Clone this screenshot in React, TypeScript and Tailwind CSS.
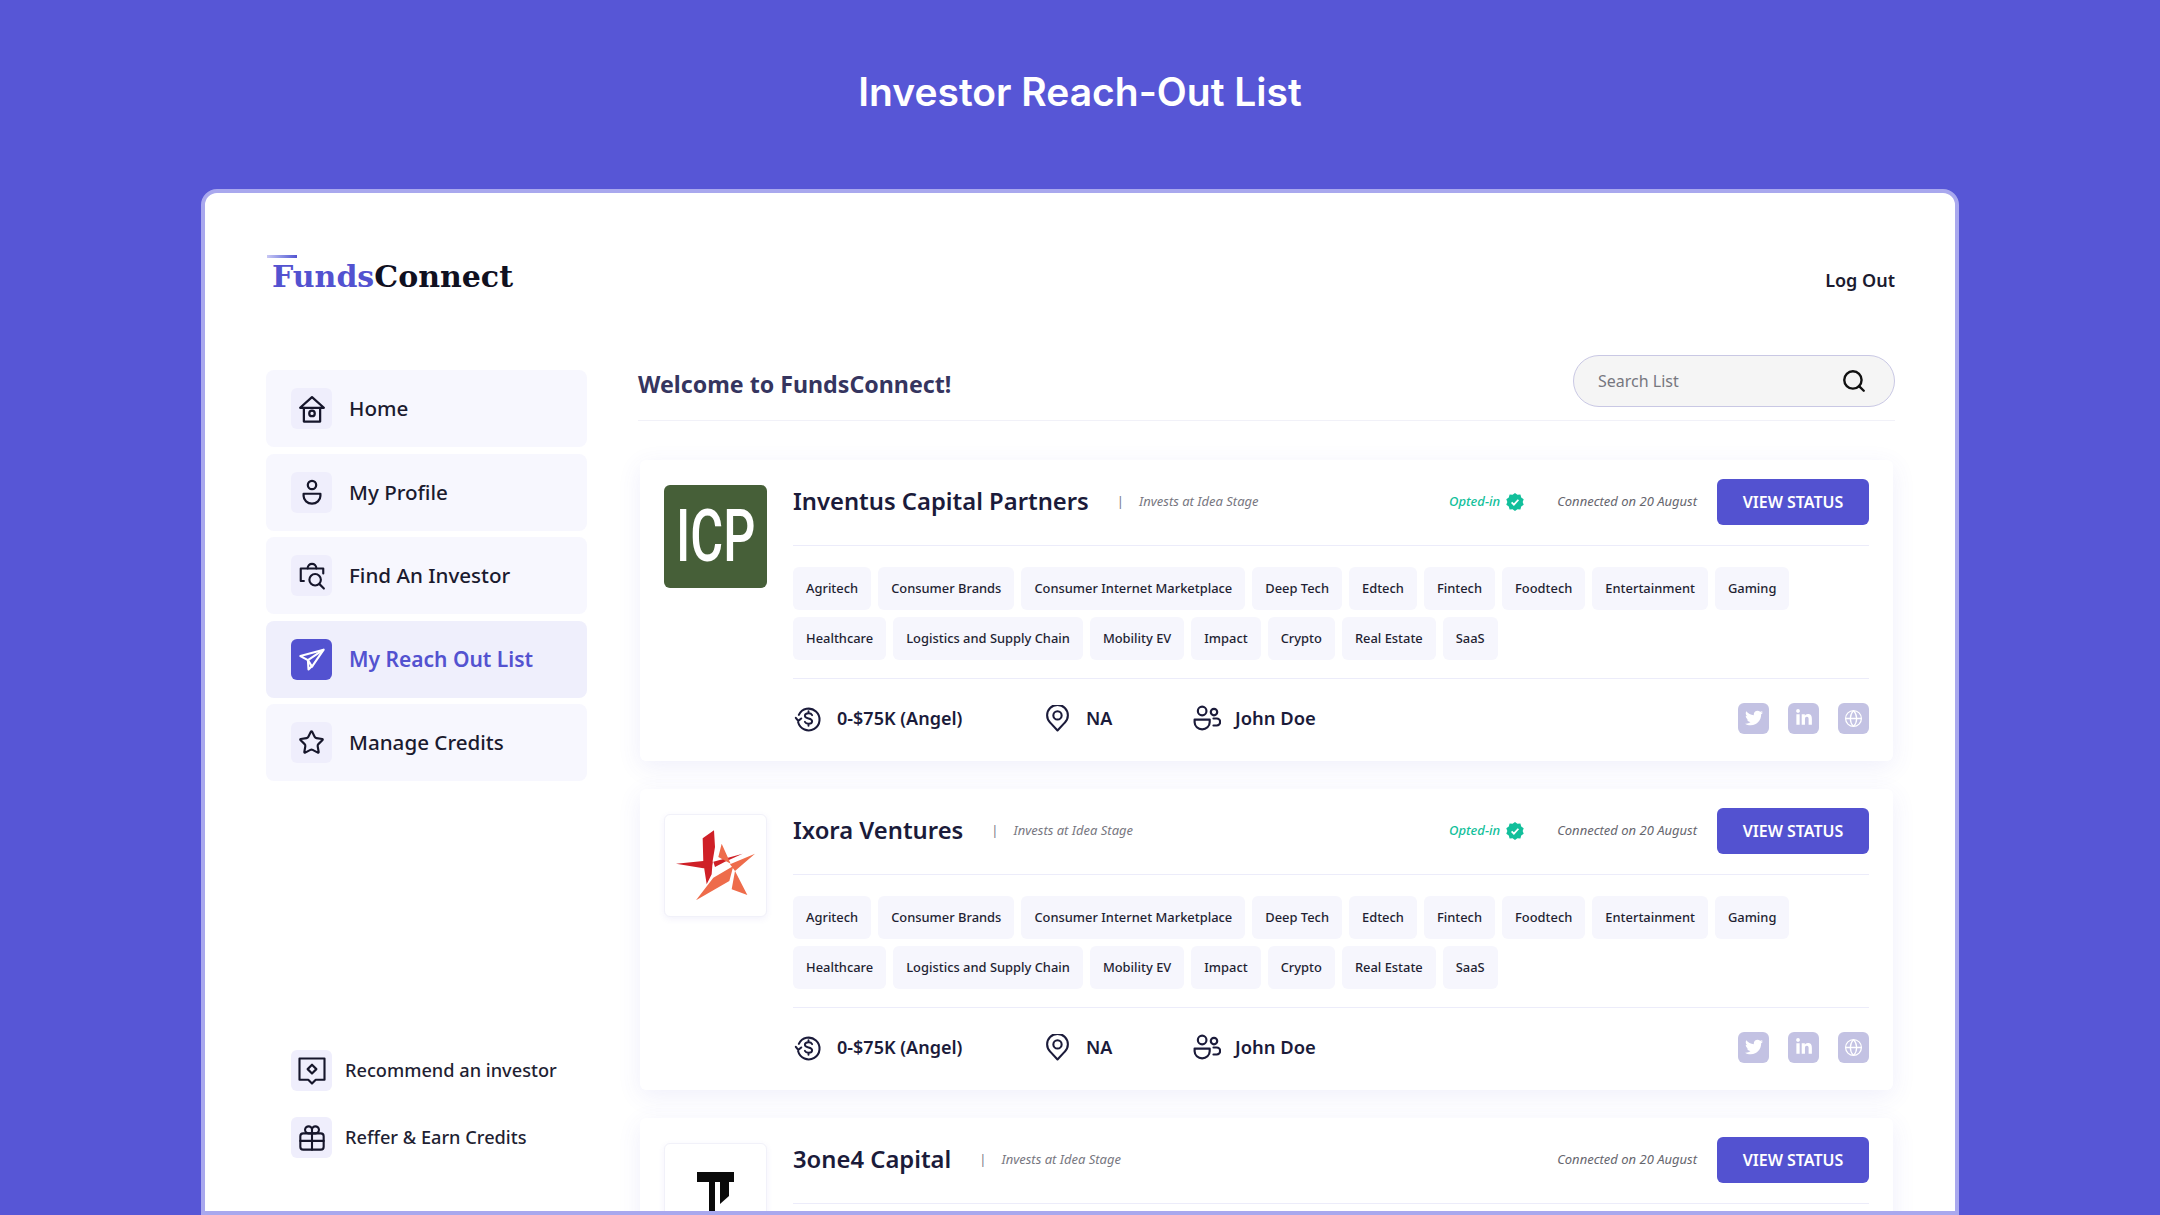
import React from 'react';
import { FaTwitter, FaLinkedinIn } from 'react-icons/fa';
import { Globe, Star, Search } from 'lucide-react';

const tags = [
  'Agritech',
  'Consumer Brands',
  'Consumer Internet Marketplace',
  'Deep Tech',
  'Edtech',
  'Fintech',
  'Foodtech',
  'Entertainment',
  'Gaming',
  'Healthcare',
  'Logistics and Supply Chain',
  'Mobility EV',
  'Impact',
  'Crypto',
  'Real Estate',
  'SaaS',
];

const strokeProps = {
  fill: 'none',
  stroke: 'currentColor',
  strokeWidth: 2,
  strokeLinecap: 'round' as const,
  strokeLinejoin: 'round' as const,
};

const HomeIcon = () => (
  <svg width="30" height="30" viewBox="0 0 24 24" {...strokeProps} strokeWidth="1.8">
    <path d="M2.500 11 12 2.500 21.500 11Z" />
    <path d="M5.500 11v11h13V11" />
    <circle cx="12" cy="15.500" r="2.200" />
  </svg>
);

const ProfileIcon = () => (
  <svg width="28" height="28" viewBox="0 0 24 24" {...strokeProps} strokeWidth="1.9">
    <circle cx="12" cy="6" r="3.600" />
    <path d="M4.800 13.500h14.400v2a7.200 6.500 0 0 1-14.400 0Z" />
  </svg>
);

const FindIcon = () => (
  <svg width="30" height="30" viewBox="0 0 24 24" {...strokeProps} strokeWidth="1.700">
    <path d="M5.500 16H3V6h18v4" />
    <path d="M8.500 6c0-5 7-5 7 0" />
    <circle cx="14.500" cy="15" r="4.600" />
    <path d="m18 18.500 3.500 3.500" />
  </svg>
);

const PlaneIcon = () => (
  <svg width="28" height="28" viewBox="0 0 24 24" fill="none" stroke="#fff" strokeWidth="1.800" strokeLinejoin="round">
    <path d="M2 9.500 22 4 12 18.500l-3.500-5.500Z" />
    <path d="M22 4 8.500 13l.5 8 3.500-3.500" />
  </svg>
);

const RecommendIcon = () => (
  <svg width="30" height="30" viewBox="0 0 24 24" {...strokeProps} strokeWidth="1.700">
    <path d="M2 2h20v17h-7l-3 3-3-3H2Z" />
    <path d="m12 7 3.500 3.500-3.500 3.500-3.500-3.500Z" />
  </svg>
);

const GiftIcon = () => (
  <svg width="28" height="28" viewBox="0 0 24 24" {...strokeProps} strokeWidth="1.800">
    <rect x="2" y="8" width="20" height="14" rx="2.500" />
    <path d="M2 14.500h20M12 8v14" />
    <path d="M12 8V5.500a3 3 0 1 0-3 2.500ZM12 8V5.500a3 3 0 1 1 3 2.500Z" />
  </svg>
);

const DollarIcon = () => (
  <svg width="29" height="29" viewBox="0 0 24 24" {...strokeProps} strokeWidth="1.700" className="shrink-0">
    <path d="M4 9a9 9 0 1 1-.6 6" />
    <path d="m1.500 11.500 2 2.500 2.500-2" />
    <path
      d="M15 9.200c-.5-1-1.600-1.500-3-1.500-1.700 0-3 .8-3 2.100 0 3 6 1.400 6 4.400 0 1.300-1.300 2.100-3 2.100-1.400 0-2.500-.5-3-1.500M12 6v1.700M12 16.300V18"
      strokeWidth="1.600"
    />
  </svg>
);

const PinIcon = () => (
  <svg width="25" height="27" viewBox="0 0 24 26" {...strokeProps} className="shrink-0">
    <path d="M12 24.500 5 17a10 10 0 1 1 14 0Z" />
    <circle cx="12" cy="10" r="4" />
  </svg>
);

const TeamIcon = () => (
  <svg width="28" height="26" viewBox="0 0 26 24" {...strokeProps} className="shrink-0">
    <circle cx="8.500" cy="5.500" r="4" />
    <path d="M1.500 13.500h14v2.500a7 6.500 0 0 1-14 0Z" />
    <circle cx="19.500" cy="6.500" r="3" />
    <path d="M19 12.500h3a2.500 2.500 0 0 1 0 6.500h-3" />
  </svg>
);

const VerifiedBadge = () => (
  <svg width="18" height="18" viewBox="0 0 24 24" className="shrink-0">
    <path
      fill="#12BF9B"
      d="m12 0 3.200 2.400 4-.3 1.100 3.800 3.300 2.300-1.400 3.800 1.400 3.800-3.300 2.300-1.100 3.800-4-.3L12 24l-3.200-2.400-4 .3-1.100-3.800L.4 15.800 1.800 12 .4 8.200l3.300-2.300 1.100-3.800 4 .3Z"
    />
    <path d="m7.500 12.500 3 3 6-6.500" fill="none" stroke="#fff" strokeWidth="2.400" />
  </svg>
);

const IcpLogo = () => (
  <div className="flex h-[103px] w-[103px] items-center justify-center overflow-hidden rounded-md bg-[#465F38]">
    <span className="scale-x-[0.7] font-['Roboto',sans-serif] text-[72px] leading-none font-medium text-white">ICP</span>
  </div>
);

const IxoraLogo = () => (
  <div className="flex h-[103px] w-[103px] items-center justify-center rounded-md border border-[#F1F1F9] bg-white shadow-[0_2px_6px_rgba(83,82,208,0.08)]">
    <svg width="92" height="90" viewBox="0 0 276 270">
      <path fill="#CF2027" d="M98 52 132 28l3 50-7 42-3 40-15 30-10-65Z" />
      <path fill="#CF2027" d="M18 128l82-8 28 2-3 16-25 4ZM130 122l88-24-53 24-30 16Z" />
      <path fill="#EE6C4B" d="m155 68 27 60-37-20ZM78 238l52-68 60-35-12 45ZM255 98l-60 52-15-20ZM195 150l37 72-47-17Z" />
    </svg>
  </div>
);

const ThreeOneFourLogo = () => (
  <div className="flex h-[103px] w-[103px] justify-center rounded-md border border-[#F1F1F9] bg-white pt-[28px] shadow-[0_2px_6px_rgba(83,82,208,0.08)]">
    <svg width="37" height="50" viewBox="0 0 37 50">
      <path fill="#0A0A0A" d="M0 0h37v10h-5v14l-9 8V10h-5v34l-6 6V10H0Z" />
    </svg>
  </div>
);

const SocialButton = ({ children }: { children: React.ReactNode }) => (
  <div className="flex h-[31px] w-[31px] items-center justify-center rounded-md bg-[#C3C2E3] text-white">{children}</div>
);

const InvestorCard = ({
  name,
  logo,
  optedIn,
}: {
  name: string;
  logo: React.ReactNode;
  optedIn?: boolean;
}) => (
  <div className="flex h-[301px] shrink-0 gap-[26px] rounded-md bg-white pt-[19px] pr-[24px] pl-[24px] shadow-[0_6px_24px_rgba(83,82,208,0.09)]">
    <div className="pt-[6px]">{logo}</div>
    <div className="flex min-w-0 flex-1 flex-col">
      <div className="flex h-[67px] items-center border-b border-[#ECECFA] pb-[21px]">
        <span className="text-[23.800px] font-semibold text-[#1B1B3A]">{name}</span>
        <span className="mr-[15px] ml-[28px] text-[13px] text-[#77778A]">|</span>
        <span className="pt-[1px] text-[13px] text-[#77777F] italic">Invests at Idea Stage</span>
        {optedIn && (
          <div className="ml-auto flex items-center gap-[6px] pt-[1px]">
            <span className="text-[13px] font-medium text-[#12BF9B] italic">Opted-in</span>
            <VerifiedBadge />
          </div>
        )}
        <span className={`${optedIn ? 'ml-[33px]' : 'ml-auto'} pt-[1px] text-[13px] text-[#66666E] italic`}>
          Connected on 20 August
        </span>
        <button className="ml-[20px] h-[46px] w-[152px] rounded-md bg-[#5352D0] text-[16px] font-semibold text-white">
          VIEW STATUS
        </button>
      </div>
      <div className="flex h-[133px] flex-wrap content-start gap-x-[7px] gap-y-[7px] border-b border-[#ECECFA] pt-[21px]">
        {tags.map((tag) => (
          <span
            key={tag}
            className="flex h-[43px] items-center rounded-md bg-[#F6F6FD] px-[13px] text-[12.900px] font-medium text-[#1F1F33]"
          >
            {tag}
          </span>
        ))}
      </div>
      <div className="flex h-[78px] items-center text-[#1B1B3A]">
        <div className="flex w-[252px] items-center gap-[14px] pl-[1px]">
          <DollarIcon />
          <span className="text-[18px] font-semibold">0-$75K (Angel)</span>
        </div>
        <div className="flex w-[148px] items-center gap-[16px]">
          <PinIcon />
          <span className="text-[18px] font-semibold">NA</span>
        </div>
        <div className="flex items-center gap-[14px]">
          <TeamIcon />
          <span className="text-[18.400px] font-semibold">John Doe</span>
        </div>
        <div className="ml-auto flex gap-[19px]">
          <SocialButton>
            <FaTwitter size={18} />
          </SocialButton>
          <SocialButton>
            <FaLinkedinIn size={18} />
          </SocialButton>
          <SocialButton>
            <Globe size={19} strokeWidth={1.6} />
          </SocialButton>
        </div>
      </div>
    </div>
  </div>
);

const navItems = [
  { label: 'Home', icon: <HomeIcon /> },
  { label: 'My Profile', icon: <ProfileIcon /> },
  { label: 'Find An Investor', icon: <FindIcon /> },
  { label: 'My Reach Out List', icon: <PlaneIcon />, active: true },
  { label: 'Manage Credits', icon: <Star size={27} strokeWidth={1.9} /> },
];

const Sidebar = () => (
  <aside className="flex w-[321px] shrink-0 flex-col justify-between pt-[15px] pb-[53px]">
    <nav className="flex flex-col gap-[6.600px]">
      {navItems.map((item) => (
        <div
          key={item.label}
          className={`flex h-[77px] items-center gap-[17px] rounded-lg px-[25px] ${item.active ? 'bg-[#EFEFFC]' : 'bg-[#F7F7FE]'}`}
        >
          <div
            className={`flex h-[41px] w-[41px] items-center justify-center rounded-md ${item.active ? 'bg-[#5352D0]' : 'bg-[#EFEEFC] text-[#16162B]'}`}
          >
            {item.icon}
          </div>
          <span
            className={item.active ? 'text-[21px] font-semibold text-[#5352D0]' : 'text-[20.600px] font-medium text-[#1B1B2F]'}
          >
            {item.label}
          </span>
        </div>
      ))}
    </nav>
    <div className="flex flex-col gap-[26px] pl-[25px]">
      <div className="flex items-center gap-[13px]">
        <div className="flex h-[41px] w-[41px] items-center justify-center rounded-md bg-[#EFEEFC] text-[#16162B]">
          <RecommendIcon />
        </div>
        <span className="text-[18.200px] font-medium text-[#1F1F33]">Recommend an investor</span>
      </div>
      <div className="flex items-center gap-[13px]">
        <div className="flex h-[41px] w-[41px] items-center justify-center rounded-md bg-[#EFEEFC] text-[#16162B]">
          <GiftIcon />
        </div>
        <span className="text-[18.200px] font-medium text-[#1F1F33]">Reffer &amp; Earn Credits</span>
      </div>
    </div>
  </aside>
);

const App = () => {
  return (
    <div className="flex h-[1215px] w-[2160px] flex-col overflow-hidden bg-[#5756D6] font-['Noto_Sans',sans-serif]">
      <h1 className="flex h-[189px] shrink-0 items-center justify-center pb-[5px] font-['Inter',sans-serif] text-[39px] font-semibold text-white">
        Investor Reach-Out List
      </h1>
      <div className="mx-[201px] flex min-h-0 flex-1 flex-col overflow-hidden rounded-t-2xl border-4 border-[#A9A8EE] bg-white pr-[60px] pl-[61px]">
        <header className="flex h-[162px] shrink-0 items-start justify-between pt-[62px]">
          <div className="relative">
            <span className="absolute top-0 left-[1px] h-[3px] w-[30px] bg-gradient-to-r from-[#C9C8F4] to-[#5352D0]" />
            <span className="pl-[6px] font-['DejaVu_Serif',serif] text-[30px] leading-[44px] font-bold">
              <span className="text-[#5352D0]">Funds</span>
              <span className="text-[#10101F]">Connect</span>
            </span>
          </div>
          <span className="pt-[12px] text-[18px] font-semibold text-[#1B1B2F]">Log Out</span>
        </header>
        <div className="flex min-h-0 flex-1 gap-[51px]">
          <Sidebar />
          <main className="flex min-w-0 flex-1 flex-col">
            <div className="flex h-[66px] shrink-0 items-center justify-between border-b border-[#F1F1F8] pb-[13px]">
              <h2 className="pt-[6px] text-[23.200px] font-bold text-[#35355F]">Welcome to FundsConnect!</h2>
              <div className="flex h-[52px] w-[322px] items-center justify-between rounded-full border border-[#C9C8E4] bg-[#F5F5F5] pr-[27px] pl-[24px]">
                <span className="text-[16px] text-[#77777F]">Search List</span>
                <Search size={26} strokeWidth={2.200} className="text-[#111]" />
              </div>
            </div>
            <div className="flex flex-col gap-[28px] px-[2px] pt-[39px]">
              <InvestorCard name="Inventus Capital Partners" logo={<IcpLogo />} optedIn />
              <InvestorCard name="Ixora Ventures" logo={<IxoraLogo />} optedIn />
              <InvestorCard name="3one4 Capital" logo={<ThreeOneFourLogo />} />
            </div>
          </main>
        </div>
      </div>
    </div>
  );
};

export default App;
